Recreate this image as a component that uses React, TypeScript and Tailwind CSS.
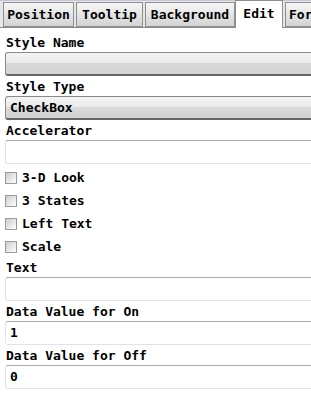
const tabs = [
  { label: "Position", w: "w-[71px]" },
  { label: "Tooltip", w: "w-[67px]" },
  { label: "Background", w: "w-[90px]" },
];

const Field = ({ value }: { value?: string }) => (
  <div className="mt-[1px] h-[24px] w-[320px] flex items-center pl-[4px] bg-white border border-[#dfe4eb] border-t-[#a9a9a9] rounded-l-[3px]">
    {value}
  </div>
);

const Select = ({ value }: { value?: string }) => (
  <div className="mt-[1px] h-[24px] w-[320px] flex items-center pl-[4px] border border-[#8a8a8a] border-b-2 border-b-[#666] rounded-l-[3px] bg-[linear-gradient(to_bottom,#f4f4f4_0%,#ebebeb_45%,#d9d9d9_50%,#d3d3d3_100%)]">
    {value}
  </div>
);

const Check = ({ label }: { label: string }) => (
  <div className="h-[23px] flex items-center">
    <span className="w-[12px] h-[12px] border border-[#9a9a9a] bg-gradient-to-br from-[#cdcdcd] to-[#ffffff]" />
    <span className="ml-[5px]">{label}</span>
  </div>
);

const App = () => {
  return (
    <div className="w-[311px] h-[413px] overflow-hidden bg-white text-black font-bold text-[13px] leading-[16px] font-['DejaVu_Sans_Mono',monospace]">
      {/* Tabs */}
      <div className="relative h-[28px] flex items-end bg-[#e6e6e6] border-t border-[#c3cbd8] border-b border-b-[#8a8a8a]">
        <div className="flex items-end pl-[3px] gap-[2px] -mb-[1px]">
          {tabs.map((t) => (
            <div
              key={t.label}
              className={`${t.w} h-[25px] mb-[1px] flex items-center justify-center border border-[#8f8f8f] bg-gradient-to-b from-[#f7f7f7] to-[#d3d3d3]`}
            >
              {t.label}
            </div>
          ))}
          <div className="w-[48px] h-[28px] -ml-[2px] flex items-start justify-center pt-[5px] bg-white border border-[#8f8f8f] border-b-0">
            Edit
          </div>
          <div className="w-[60px] h-[25px] mb-[1px] flex items-center pl-[3px] border border-[#8f8f8f] bg-gradient-to-b from-[#f7f7f7] to-[#d3d3d3]">
            Form
          </div>
        </div>
      </div>

      {/* Form */}
      <div className="flex flex-col pl-[5px] pt-[7px]">
        <div className="pl-[1px]">Style Name</div>
        <Select />
        <div className="pl-[1px] mt-[3px]">Style Type</div>
        <Select value="CheckBox" />
        <div className="pl-[1px] mt-[3px]">Accelerator</div>
        <Field />

        <div className="mt-[2px] flex flex-col">
          <Check label="3-D Look" />
          <Check label="3 States" />
          <Check label="Left Text" />
          <Check label="Scale" />
        </div>

        <div className="pl-[1px] mt-[2px]">Text</div>
        <Field />
        <div className="pl-[1px] mt-[3px]">Data Value for On</div>
        <Field value="1" />
        <div className="pl-[1px] mt-[3px]">Data Value for Off</div>
        <Field value="0" />
      </div>
    </div>
  );
};

export default App;
